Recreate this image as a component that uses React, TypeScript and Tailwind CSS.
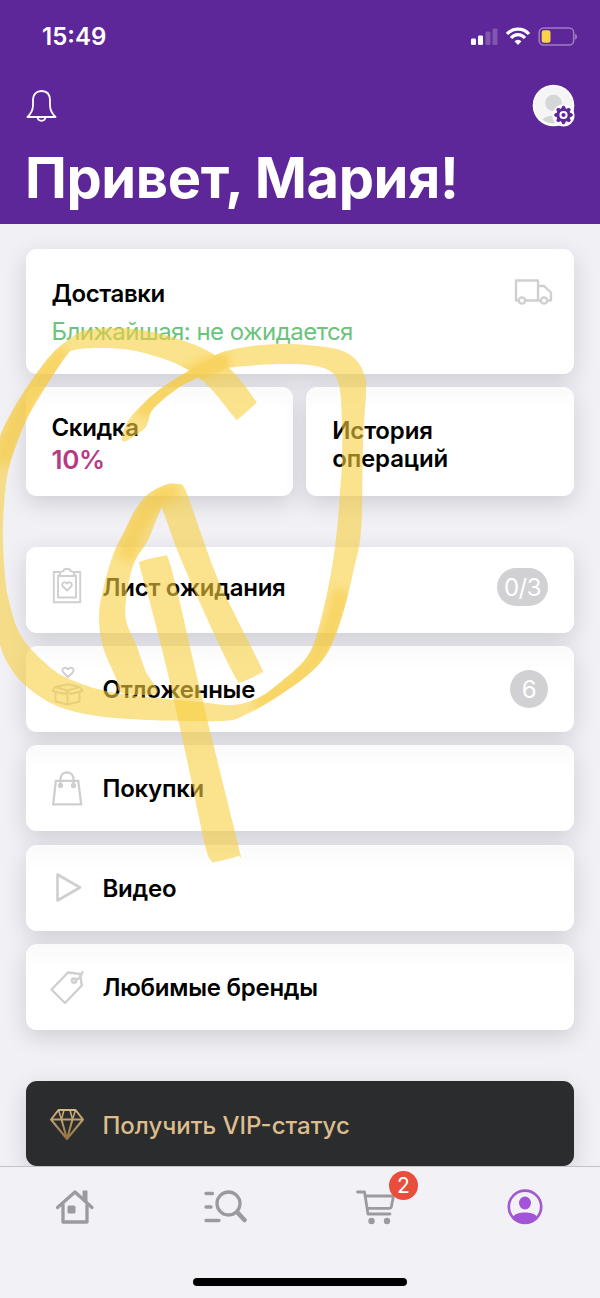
import React from "react";

type Point = [number, number];

/** Closed Catmull-Rom curve through the outline points of a marker stroke. */
function smooth(points: Point[]): string {
  const n = points.length;
  let d = `M${points[0][0]} ${points[0][1]}`;
  for (let i = 0; i < n; i++) {
    const a = points[(i - 1 + n) % n];
    const b = points[i];
    const c = points[(i + 1) % n];
    const e = points[(i + 2) % n];
    d += `C${b[0] + (c[0] - a[0]) / 6} ${b[1] + (c[1] - a[1]) / 6} ${c[0] - (e[0] - b[0]) / 6} ${c[1] - (e[1] - b[1]) / 6} ${c[0]} ${c[1]}`;
  }
  return d + "Z";
}

const circleStroke: Point[] = [
  [256, 403], [255, 400], [237, 376], [217, 357], [204, 349], [187, 342], [153, 332], [120, 328], [87, 330], [72, 337],
  [50, 356], [27, 387], [10, 415], [0, 437], [-12, 480], [-14, 540], [-12, 600], [0, 645], [10, 667], [27, 687],
  [57, 706], [97, 716], [150, 720], [220, 721], [243, 716], [277, 697], [310, 673], [329, 650], [343, 613], [353, 573],
  [361, 530], [363, 443], [366, 393], [365, 377], [357, 361], [340, 350], [307, 345], [280, 344], [253, 346], [220, 353],
  [190, 370], [160, 389], [140, 407], [128, 421], [122, 437], [126, 441], [143, 430], [148, 422], [154, 408], [183, 385],
  [220, 370], [247, 366], [280, 364], [310, 365], [330, 371], [339, 385], [342, 420], [342, 460], [340, 493], [337, 530],
  [332, 567], [324, 607], [314, 643], [303, 662], [283, 680], [260, 697], [233, 705], [200, 702], [167, 699], [110, 692],
  [67, 678], [43, 661], [20, 634], [8, 597], [4, 563], [3, 523], [7, 477], [17, 443], [30, 413], [50, 380], [67, 355],
  [75, 350], [97, 348], [130, 350], [167, 360], [193, 373], [213, 391], [234, 417], [238, 419],
];

const chevronStroke: Point[] = [
  [122, 693], [116, 678], [103, 647], [99, 617], [103, 590], [113, 555], [126, 528], [134, 512], [147, 495], [165, 485],
  [177, 484], [185, 489], [198, 525], [217, 577], [240, 625], [262, 669], [261, 673], [241, 682], [237, 680], [224, 655],
  [200, 603], [178, 552], [163, 511], [160, 511], [148, 540], [134, 563], [127, 593], [126, 620], [137, 647], [146, 672],
  [157, 693],
];

const lineStroke: Point[] = [
  [140, 567], [142, 561], [164, 556], [168, 558], [177, 590], [193, 660], [213, 743], [240, 853], [238, 856], [215, 862],
  [211, 860], [205, 845], [187, 760], [167, 670], [150, 603],
];

const overlapPatch: Point[] = [
  [193, 373], [190, 370], [206, 361], [220, 354], [228, 366], [207, 377], [199, 379],
];

function Marker() {
  return (
    <svg className="pointer-events-none absolute left-0 top-0 z-20" width="600" height="1298" viewBox="0 0 600 1298" fill="#f9cf40" fillOpacity="0.6">
      <defs>
        <filter id="soften" x="-20%" y="-20%" width="140%" height="140%">
          <feGaussianBlur stdDeviation="5" />
        </filter>
        <clipPath id="circle"><path d={smooth(circleStroke)} /></clipPath>
        <clipPath id="chevron"><path d={smooth(chevronStroke)} /></clipPath>
      </defs>
      <path d={smooth(circleStroke)} />
      <path d={smooth(chevronStroke)} />
      <path d={smooth(lineStroke)} />
      <path d={smooth(overlapPatch)} fillOpacity="0.2" />
      <g fill="none" stroke="#f3c534" strokeWidth="18" strokeOpacity="0.45">
        <g clipPath="url(#circle)">
          <g filter="url(#soften)">
            <path d="M65 350C35 385 12 420 2 465" />
            <path d="M255 704C300 685 330 655 342 590" />
            <path d="M140 415C165 385 200 366 230 360" />
          </g>
        </g>
        <g clipPath="url(#chevron)">
          <path d="M125 560C140 510 155 493 178 492" filter="url(#soften)" />
        </g>
      </g>
    </svg>
  );
}

const stroke = { fill: "none", stroke: "#cfcfd2", strokeWidth: 2.3, strokeLinejoin: "round" as const, strokeLinecap: "round" as const };

function ClipboardIcon() {
  return (
    <svg width="34" height="40" viewBox="0 0 34 40" {...stroke} strokeWidth={1.9}>
      <path d="M9.500 5H3.800v30.300h26.400V5H24.500" />
      <path d="M9.500 8.500H8V30.500h18V8.500h-1.500" />
      <path d="M10 9V5.200l3.500-1c.5-3.300 6.500-3.300 7 0l3.500 1V9z" />
      <path d="M17 23.500l-4.300-4.200c-2-3.200 1.900-5.500 4.300-2.800 2.400-2.700 6.300-.4 4.300 2.800z" />
    </svg>
  );
}

function BoxIcon() {
  return (
    <svg className="overflow-visible" width="34" height="40" viewBox="0 0 34 40" {...stroke} strokeWidth={1.900}>
      <path d="M18 8l-4.700-4.500c-2.800-3.700 2-6.500 4.700-3 2.700-3.500 7.500-.7 4.700 3z" />
      <path d="M5 18l12.500-2.800L30 18l-12.500 3.500zM5 18l-2.500 4L15 25l2.500-3.500L20.500 25 32.500 22 30 18M5.500 23.500v9L17.500 35.500l12-3v-9M17.500 22v13" />
    </svg>
  );
}

function BagIcon() {
  return (
    <svg width="34" height="40" viewBox="0 0 34 40" {...stroke} strokeLinejoin="miter">
      <path d="M5.800 12.800h22.400l3 23.500H3.200z" />
      <path d="M10.500 17V11c0-8.700 13-8.700 13 0v6" />
      <circle cx="10.500" cy="17.500" r="1.500" fill="#cfcfd2" />
      <circle cx="23.500" cy="17.500" r="1.500" fill="#cfcfd2" />
    </svg>
  );
}

function PlayIcon() {
  return (
    <svg width="34" height="40" viewBox="0 0 34 40" {...stroke} strokeWidth={2.6}>
      <path d="M7.500 6.500v26l22.500-13z" />
    </svg>
  );
}

function TagIcon() {
  return (
    <svg width="34" height="40" viewBox="0 0 34 40" {...stroke} strokeWidth={2.3}>
      <path d="M1.500 22.500L18 5.500l12 1.500 1.800 11.500L15 36z" />
      <circle cx="24" cy="13.500" r="2.200" />
      <path d="M24.500 12.500c4 .5 6.500-2.500 8-7.500" />
    </svg>
  );
}

function TruckIcon() {
  return (
    <svg width="40" height="28" viewBox="0 0 40 28" {...stroke}>
      <path d="M5 22.500H2V2.500h22v20H11M24 8h6l7 6.500v8h-3M24 22.500h1.500" />
      <circle cx="8" cy="22.500" r="3.200" />
      <circle cx="30" cy="22.500" r="3.200" />
    </svg>
  );
}

function DiamondIcon() {
  return (
    <svg width="36" height="34" viewBox="0 0 36 34" fill="none" stroke="url(#gold)" strokeWidth="2" strokeLinejoin="round">
      <defs>
        <linearGradient id="gold" x1="0" y1="0" x2="0" y2="34" gradientUnits="userSpaceOnUse">
          <stop offset="0" stopColor="#dcbf8c" />
          <stop offset="1" stopColor="#94703f" />
        </linearGradient>
      </defs>
      <path d="M9.500 4h17L34 13.500 18 33 2 13.500zM2 13.500l32 .01M12.500 13.500L18 33 23.500 13.500" />
      <path d="M9.500 4l3 9.500L15 4M21 4l2.500 9.500 3-9.500" strokeWidth="1.500" />
    </svg>
  );
}

function BellIcon() {
  return (
    <svg width="32" height="34" viewBox="0 0 32 34" fill="none" stroke="#fff" strokeWidth="1.800" strokeLinejoin="round">
      <path d="M1.500 28C4 25.500 7 21.500 7 16.500v-5C7 5 10.500 2 15.500 2S24 5 24 11.500v5c0 5 3 9 5.500 11.500z" />
      <path d="M11.500 28c.5 5 7.500 5 8 0" />
    </svg>
  );
}

const gearPoints = Array.from({ length: 32 }, (_, i) => {
  const r = i % 4 < 2 ? 8.8 : 6.6;
  const t = ((i - 0.5) * Math.PI) / 16;
  return `${30 + r * Math.cos(t)},${30.5 + r * Math.sin(t)}`;
}).join(" ");

function Avatar() {
  return (
    <svg width="44" height="44" viewBox="0 0 44 44">
      <circle cx="21.500" cy="21.500" r="20.800" fill="#fff" />
      <circle cx="21.500" cy="21.500" r="19" fill="#f5f5f5" />
      <circle cx="21.500" cy="19" r="8.300" fill="#d5d6d8" />
      <path d="M10.500 35.500c4-5 17-5 21 0-5 5-16 5-21 0z" fill="#d5d6d8" />
      <circle cx="31.500" cy="31.500" r="11" fill="#fff" />
      <g transform="translate(1.500 .5)">
        <polygon points={gearPoints} fill="#5e2799" stroke="#5e2799" strokeWidth="1" strokeLinejoin="round" />
        <circle cx="30" cy="30.500" r="3.100" fill="#5e2799" stroke="#fff" strokeWidth="2" />
      </g>
    </svg>
  );
}

function StatusIcons() {
  return (
    <svg width="108" height="22" viewBox="0 0 108 22">
      <g fill="#fff">
        <rect x="1" y="13.500" width="5" height="6.500" rx="1.200" />
        <rect x="8" y="10.500" width="5" height="9.500" rx="1.200" />
        <rect x="15.500" y="6.500" width="5" height="13.500" rx="1.200" opacity=".22" />
        <rect x="22.500" y="3.500" width="5" height="16.500" rx="1.200" opacity=".22" />
      </g>
      <g fill="none" stroke="#fff" strokeWidth="3.300">
        <path d="M37 9c6-6.600 16-6.600 22 0" />
        <path d="M41 13c4-4.400 10-4.400 14 0" />
      </g>
      <path d="M44.500 16.300c2.200-2 4.800-2 7 0L48 20z" fill="#fff" />
      <rect x="69.200" y="3" width="34.500" height="17" rx="4.500" fill="none" stroke="#fff" strokeOpacity=".4" strokeWidth="1.500" />
      <path d="M105.200 9c2.300.5 2.300 5 0 5.500z" fill="#fff" opacity=".45" />
      <rect x="71.700" y="5.300" width="8.800" height="12.400" rx="2.300" fill="#fbd34b" />
    </svg>
  );
}

const rows = [
  { label: "Лист ожидания", icon: <ClipboardIcon />, badge: "0/3", lift: "pb-[6px]" },
  { label: "Отложенные", icon: <BoxIcon />, badge: "6", lift: "" },
  { label: "Покупки", icon: <BagIcon />, badge: "", lift: "" },
  { label: "Видео", icon: <PlayIcon />, badge: "", lift: "" },
  { label: "Любимые бренды", icon: <TagIcon />, badge: "", lift: "" },
];

const card = "rounded-[11px] bg-linear-to-b to-white to-[24px] shadow-[0_7px_22px_rgba(40,40,60,0.17)]";

export default function App() {
  return (
    <div className="relative flex h-[1298px] w-[600px] flex-col overflow-hidden bg-[#f0f0f5] font-['Inter','Liberation_Sans',sans-serif] text-black">
      <header className="flex h-[224px] shrink-0 flex-col bg-[#5e2799] text-white">
        <div className="flex h-[72px] items-center justify-between pl-[42px] pr-[22px]">
          <span className="pt-[2px] text-[24px] font-semibold">15:49</span>
          <StatusIcons />
        </div>
        <div className="flex h-[68px] items-center justify-between pl-[26px] pr-[24px]">
          <BellIcon />
          <Avatar />
        </div>
        <h1 className="whitespace-nowrap pl-[25px] text-[56px] font-bold leading-[77px] tracking-[-0.4px]">Привет, Мария!</h1>
      </header>

      <main className="flex flex-1 flex-col pl-[25.500px] pr-[26px] pt-[25px]">
        <section className={`flex h-[125px] shrink-0 justify-between from-white pl-[26px] pr-[20px] pt-[29px] ${card}`}>
          <div className="flex flex-col whitespace-nowrap">
            <span className="text-[24px] font-semibold leading-[32px] tracking-[-0.42px]">Доставки</span>
            <span className="mt-[6px] text-[24px] leading-[32px] tracking-[-0.53px] text-[#6bc37c]">Ближайшая: не ожидается</span>
          </div>
          <TruckIcon />
        </section>

        <div className="mt-[13px] grid h-[109px] shrink-0 grid-cols-2 gap-[13px]">
          <section className={`flex flex-col from-[#fafafb] pl-[26px] pt-[25px] ${card}`}>
            <span className="text-[24px] font-semibold leading-[31px] tracking-[-0.35px]">Скидка</span>
            <span className="pt-px text-[26px] font-semibold leading-[32px] tracking-[-0.3px] text-[#b83a82]">10%</span>
          </section>
          <section className={`from-[#fafafb] pl-[26px] pt-[30px] text-[24px] font-semibold leading-[28px] tracking-[-0.15px] ${card}`}>
            История<br />операций
          </section>
        </div>

        <nav className="mt-[51px] flex shrink-0 flex-col gap-[13.200px]">
          {rows.map((row, i) => (
            <div key={row.label} className={`flex h-[86px] items-center pl-[24px] pr-[26px] ${i === 0 ? "from-white" : "from-[#fafafb]"} ${row.lift} ${card}`}>
              {row.icon}
              <span className="ml-[19px] flex-1 whitespace-nowrap pt-[2px] text-[24px] font-semibold tracking-[-0.25px]">{row.label}</span>
              {row.badge && (
                <span className="flex h-[38px] min-w-[38px] items-center justify-center rounded-full bg-[#d1d1d4] px-[7px] pt-px text-[24px] tracking-[-0.5px] text-white">{row.badge}</span>
              )}
            </div>
          ))}
        </nav>

        <div className="mt-[51px] flex h-[85px] shrink-0 items-center rounded-[11px] bg-[#2b2c2e] pl-[23px] text-[#ddbd8c] shadow-[0_7px_22px_rgba(40,40,60,0.17)]">
          <DiamondIcon />
          <span className="ml-[18px] whitespace-nowrap pt-[5px] text-[24px] font-medium">Получить VIP-статус</span>
        </div>
      </main>

      <footer className="relative z-10 flex h-[133px] shrink-0 flex-col items-center border-t border-[#c2c2c8] bg-[#f1f1f6]">
        <div className="grid w-full grid-cols-4">
          <div className="flex h-[81px] items-center justify-center">
            <svg width="40" height="36" viewBox="0 0 40 36" fill="none" stroke="#9b9b9f" strokeWidth="3.300" strokeLinejoin="round" strokeLinecap="round">
              <path d="M2.500 18.500L20 3l17 15.500" />
              <path d="M8 16v17h24V16" />
              <path d="M27.500 1.500h5V15l-5-4.500z" fill="#9b9b9f" stroke="none" />
              <rect x="12.500" y="16.500" width="8" height="8" rx="1.500" fill="#9b9b9f" stroke="none" />
            </svg>
          </div>
          <div className="flex h-[81px] items-center justify-center">
            <svg width="44" height="36" viewBox="0 0 44 36" fill="none" stroke="#9b9b9f" strokeWidth="3.300" strokeLinecap="round">
              <path d="M3 4.500h6.500M3 18h5M3 31.500h13" />
              <circle cx="25.500" cy="14.500" r="11.500" />
              <path d="M34.500 23.500l7 7.500" strokeWidth="4.500" />
            </svg>
          </div>
          <div className="flex h-[81px] items-center justify-center">
            <div className="relative">
              <svg width="40" height="36" viewBox="0 0 40 36" fill="none" stroke="#9b9b9f" strokeWidth="2.800" strokeLinejoin="round" strokeLinecap="round">
                <path d="M2.500 3h7l3.500 22h22" />
                <path d="M10.500 7h28l-2.300 11.500-1.500.8H12.500" />
                <circle cx="16.500" cy="32" r="3.200" fill="#9b9b9f" stroke="none" />
                <circle cx="32" cy="32" r="3.200" fill="#9b9b9f" stroke="none" />
              </svg>
              <span className="absolute left-[34px] top-[-18px] flex size-[29px] items-center justify-center rounded-full bg-[#e94e3d] text-[21px] text-white">2</span>
            </div>
          </div>
          <div className="flex h-[81px] items-center justify-center">
            <svg width="36" height="36" viewBox="0 0 36 36">
              <circle cx="18" cy="17.800" r="16.200" fill="none" stroke="#a25ad0" strokeWidth="2.700" />
              <ellipse cx="18" cy="14" rx="6" ry="6.500" fill="#a353d8" />
              <path d="M6 27.500c4-5.500 20-5.500 24 0-5 9-19 9-24 0z" fill="#a353d8" />
            </svg>
          </div>
        </div>
        <div className="mt-[30px] h-[8px] w-[214px] rounded-full bg-black" />
      </footer>

      <Marker />
    </div>
  );
}
